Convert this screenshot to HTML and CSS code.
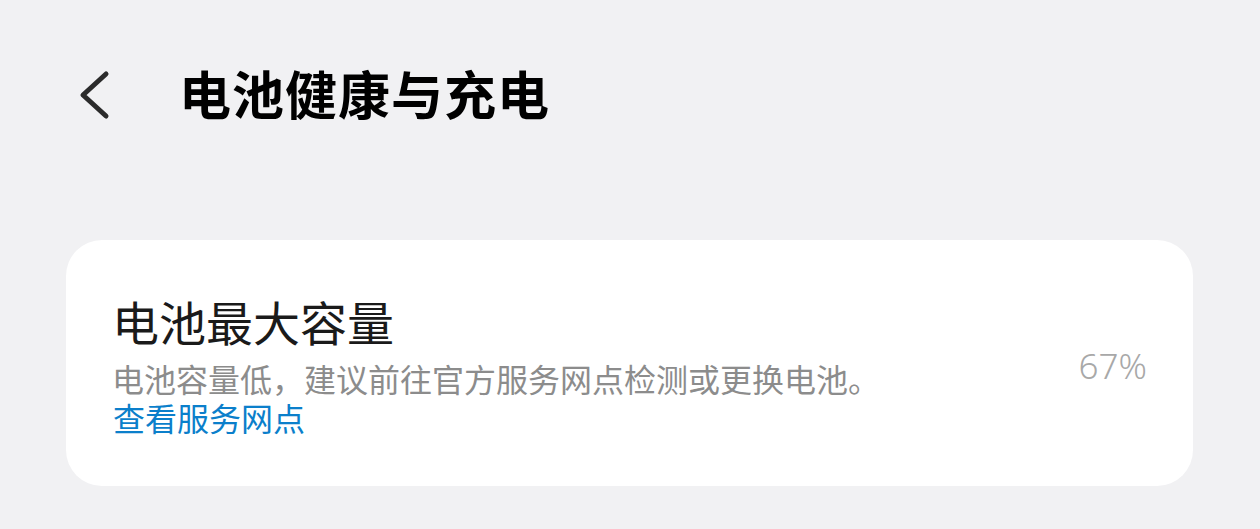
FILE: index.html
```html
<!DOCTYPE html>
<html lang="zh-CN">
<head>
  <meta charset="UTF-8" />
  <title>电池健康与充电</title>
  <link rel="stylesheet" href="styles.css">
</head>
<body>
  <div class="header">
    <div class="back">
      <svg width="34" height="52" viewBox="0 0 34 52">
        <polyline points="27,5 4,26 27,47" fill="none" stroke="#2b2b2b" stroke-width="5" stroke-linecap="round" stroke-linejoin="round"/>
      </svg>
    </div>
    <h1>电池健康与充电</h1>
  </div>

  <div class="card">
    <div class="card-text">
      <div class="card-title">电池最大容量</div>
      <div class="card-desc">电池容量低，建议前往官方服务网点检测或更换电池。</div>
      <div class="card-link">查看服务网点</div>
    </div>
    <div class="card-value">67%</div>
  </div>
</body>
</html>
```

FILE: styles.css
```css
body {
  font-family: "Noto Sans", "Noto Sans CJK SC", sans-serif;
  margin: 0;
  padding: 0;
  background: #f1f1f3;
  width: 1260px;
  height: 529px;
  overflow: hidden;
}

.header {
  display: flex;
  align-items: center;
  padding: 63px 0 0 79px;
  height: 64px;
}

.back {
  width: 34px;
  height: 52px;
  margin-right: 66px;
}

.back svg {
  display: block;
}

h1 {
  margin: 0;
  font-size: 52px;
  line-height: 64px;
  font-weight: 700;
  color: #000;
  letter-spacing: 1px;
}

.card {
  margin: 113px 0 0 66px;
  width: 1127px;
  height: 246px;
  box-sizing: border-box;
  padding: 55px 46px 0 49px;
  background: #ffffff;
  border-radius: 36px;
  display: flex;
  justify-content: space-between;
}

.card-title {
  font-size: 47px;
  line-height: 57px;
  color: #1a1a1a;
  margin-left: -3px;
  margin-bottom: 8px;
}

.card-desc {
  font-size: 32px;
  line-height: 40px;
  color: #8c8c8c;
  margin-left: -3px;
}

.card-link {
  font-size: 32px;
  line-height: 38px;
  color: #0b7fcb;
  margin-left: -2px;
}

.card-value {
  font-size: 35px;
  font-weight: 300;
  color: #a8a8a8;
  margin-top: 47px;
  line-height: 47px;
}
```
